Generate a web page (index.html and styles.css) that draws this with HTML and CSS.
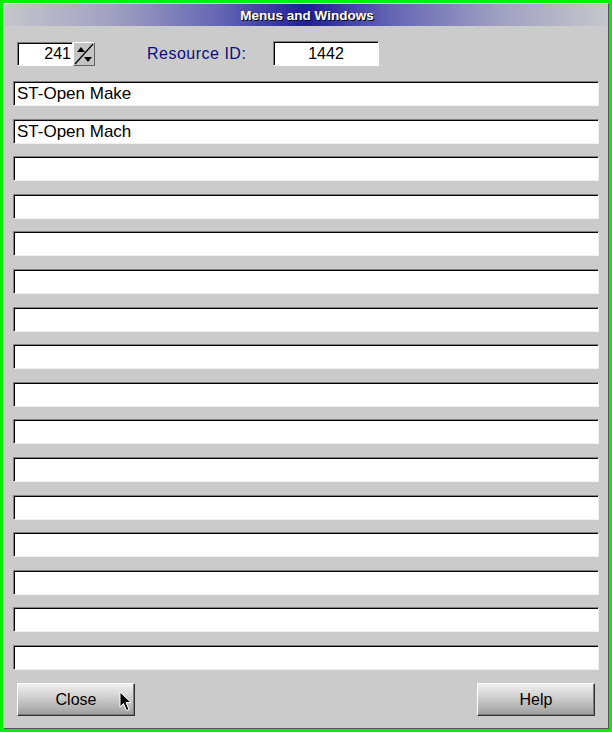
FILE: index.html
```html
<!DOCTYPE html>
<html>
<head>
<meta charset="utf-8">
<link rel="stylesheet" href="styles.css">
</head>
<body>
<div class="window">
  <div class="titlebar"><span class="title">Menus and Windows</span></div>
  <div class="content">
    <div class="toprow">
      <div class="spin">
        <div class="numbox">241</div>
        <div class="spinbtn">
          <svg width="20" height="22" viewBox="0 0 20 22">
            <line x1="1" y1="21" x2="19" y2="1" stroke="#000" stroke-width="1.2"/>
            <polygon points="3,9 7,4 11,9" fill="#000"/>
            <polygon points="10,14 18,14 14,19" fill="#000"/>
          </svg>
        </div>
      </div>
      <div class="label">Resource ID:</div>
      <div class="idbox">1442</div>
    </div>
    <div class="fields">
      <div class="field">ST-Open Make</div>
      <div class="field">ST-Open Mach</div>
      <div class="field"></div>
      <div class="field"></div>
      <div class="field"></div>
      <div class="field"></div>
      <div class="field"></div>
      <div class="field"></div>
      <div class="field"></div>
      <div class="field"></div>
      <div class="field"></div>
      <div class="field"></div>
      <div class="field"></div>
      <div class="field"></div>
      <div class="field"></div>
      <div class="field"></div>
    </div>
    <div class="buttons">
      <div class="btn close">Close
        <svg class="cursor" width="14" height="22" viewBox="0 0 14 22">
          <path d="M1 1 L1 16 L4.5 12.5 L7.5 19.5 L10 18.5 L7 11.5 L12 11.5 Z" fill="#000" stroke="#fff" stroke-width="1" stroke-linejoin="miter"/>
        </svg>
      </div>
      <div class="btn help">Help</div>
    </div>
  </div>
</div>
</body>
</html>
```

FILE: styles.css
```css
html, body {
  margin: 0;
  padding: 0;
}
body {
  background: #00f000;
  width: 612px;
  height: 732px;
  padding: 3px;
  box-sizing: border-box;
  font-family: "Liberation Sans", Arial, sans-serif;
}
.window {
  width: 606px;
  height: 726px;
  box-sizing: border-box;
  background: #cbcbcb;
  border-top: 1px solid #f4f4f4;
  border-left: 1px solid #f4f4f4;
  border-right: 1px solid #555;
  border-bottom: 1px solid #555;
  display: flex;
  flex-direction: column;
}
.titlebar {
  height: 22px;
  background: linear-gradient(to right, #c6c6cc 0%, #a0a0c2 18%, #6464b4 36%, #1e1e96 50%, #6464b4 64%, #a0a0c2 82%, #c6c6cc 100%);
  display: flex;
  align-items: center;
  justify-content: center;
}
.title {
  color: #fff;
  font-weight: bold;
  font-size: 13.5px;
  text-shadow: 1px 1px 0 #000;
  margin-left: 2px;
}
.content {
  padding: 15px 9px 0 9px;
  display: flex;
  flex-direction: column;
}
.toprow {
  height: 25px;
  display: flex;
  align-items: center;
}
.spin {
  display: flex;
  margin-left: 4px;
  height: 24px;
}
.numbox {
  width: 56px;
  height: 24px;
  box-sizing: border-box;
  background: #fff;
  border: 1px solid;
  border-color: #808080 #fff #fff #808080;
  box-shadow: inset 1px 1px 0 #000;
  font-size: 16px;
  text-align: right;
  line-height: 22px;
  padding-right: 1px;
}
.spinbtn {
  width: 22px;
  height: 24px;
  box-sizing: border-box;
  background: #c4c4c4;
  border: 1px solid;
  border-color: #fff #606060 #606060 #fff;
  display: flex;
  align-items: center;
  justify-content: center;
}
.spinbtn svg {
  display: block;
}
.label {
  margin-left: 52px;
  width: 126px;
  color: #0c0c80;
  font-size: 16px;
  letter-spacing: 0.5px;
}
.idbox {
  width: 106px;
  height: 25px;
  box-sizing: border-box;
  background: #fff;
  border: 1px solid;
  border-color: #808080 #fff #fff #808080;
  box-shadow: inset 1px 1px 0 #000;
  font-size: 16px;
  text-align: center;
  line-height: 23px;
}
.fields {
  margin-top: 15px;
  height: 589px;
  display: flex;
  flex-direction: column;
  justify-content: space-between;
}
.field {
  height: 25px;
  box-sizing: border-box;
  background: #fff;
  border: 1px solid;
  border-color: #808080 #f0f0f0 #f0f0f0 #808080;
  box-shadow: inset 1px 1px 0 #000;
  font-size: 17px;
  line-height: 23px;
  padding-left: 3px;
  color: #000;
}
.buttons {
  margin-top: 13px;
  display: flex;
  justify-content: space-between;
  padding-left: 4px;
  padding-right: 4px;
}
.btn {
  position: relative;
  width: 118px;
  height: 33px;
  box-sizing: border-box;
  border: 1px solid;
  border-color: #fff #303030 #303030 #fff;
  box-shadow: inset -1px -1px 0 #7a7a7a;
  background: linear-gradient(to bottom, #efefef 0%, #d6d6d6 35%, #b4b4b4 75%, #9c9c9c 100%);
  font-size: 16px;
  display: flex;
  align-items: center;
  justify-content: center;
  color: #000;
}
.cursor {
  position: absolute;
  left: 101px;
  top: 7px;
}
```
